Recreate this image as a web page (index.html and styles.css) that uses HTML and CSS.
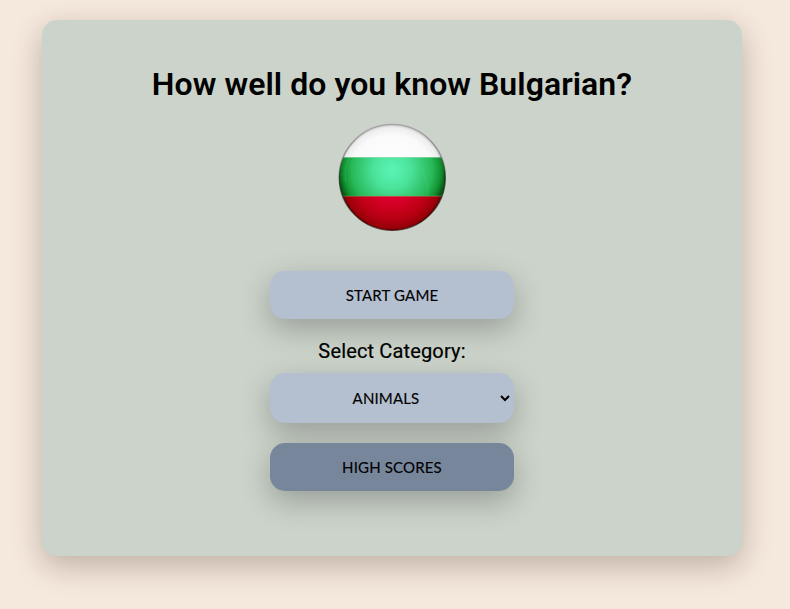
FILE: index.html
```html
<!DOCTYPE html>
<html lang="en">
<head>
<meta charset="utf-8">
<title>How well do you know Bulgarian?</title>
<link rel="stylesheet" href="styles.css">
</head>
<body>
<main class="card">
  <h1 class="title">How well do you know Bulgarian?</h1>
  <svg class="flag" viewBox="0 0 110 110" aria-hidden="true">
    <defs>
      <clipPath id="disc"><circle cx="55.3" cy="54.4" r="53"/></clipPath>
      <radialGradient id="white" gradientUnits="userSpaceOnUse" cx="55" cy="55" r="54">
        <stop offset="0" stop-color="#fff"/><stop offset=".8" stop-color="#fafafa"/><stop offset=".94" stop-color="#ededed"/><stop offset="1" stop-color="#bbb"/>
      </radialGradient>
      <radialGradient id="green" gradientUnits="userSpaceOnUse" cx="55" cy="47" r="54">
        <stop offset="0" stop-color="#5cf5b8"/><stop offset=".35" stop-color="#4be29a"/><stop offset=".75" stop-color="#28b858"/><stop offset=".9" stop-color="#129331"/><stop offset="1" stop-color="#075714"/>
      </radialGradient>
      <radialGradient id="red" gradientUnits="userSpaceOnUse" cx="55" cy="55" r="54">
        <stop offset="0" stop-color="#ed0035"/><stop offset=".4" stop-color="#dc002b"/><stop offset=".75" stop-color="#b90013"/><stop offset=".93" stop-color="#970008"/><stop offset="1" stop-color="#450000"/>
      </radialGradient>
      <linearGradient id="rim" x1="0" y1="0" x2="0" y2="1">
        <stop offset="0" stop-color="#888" stop-opacity=".6"/><stop offset=".3" stop-color="#666" stop-opacity=".6"/><stop offset=".5" stop-color="#031e06" stop-opacity=".6"/><stop offset="1" stop-color="#240000" stop-opacity=".6"/>
      </linearGradient>
    </defs>
    <g clip-path="url(#disc)">
      <path fill="url(#white)" d="M0 0h110v35H0z"/>
      <path fill="url(#green)" d="M0 34.4h110v39H0z"/>
      <path fill="url(#red)" d="M0 73.2h110V110H0z"/>
      <path d="M0 34.5h110" stroke="#168b43" stroke-opacity=".3" stroke-width=".7"/>
      <path d="M0 73h110" stroke="#77c95d" stroke-opacity=".4" stroke-width=".7"/>
      <path d="M12 34.4Q6 47 9 59M78 34.4Q91 51 91 73" fill="none" stroke="#57dc91" stroke-opacity=".18" stroke-width="1.2"/>
    </g>
    <circle cx="55.3" cy="54.4" r="53" fill="none" stroke="url(#rim)" stroke-width="1.4"/>
  </svg>
  <button class="control start" type="button">START GAME</button>
  <label class="label" for="category">Select Category:</label>
  <select class="control select" id="category"><option>ANIMALS</option></select>
  <button class="control scores" type="button">HIGH SCORES</button>
</main>
</body>
</html>
```
FILE: styles.css
```css
* { box-sizing: border-box; }
body {
  margin: 0;
  padding: 20px 48px 0 42px;
  min-height: 609px;
  background: #f5e8dc;
  color: #000;
  font-family: Roboto, sans-serif;
}
.card {
  display: flex;
  flex-direction: column;
  align-items: center;
  width: 700px;
  height: 536px;
  padding-top: 45px;
  border-radius: 15px;
  background: #cbd3ca;
  box-shadow: 0 10px 30px rgba(40, 15, 15, .26);
}
.title {
  margin: 0;
  font-size: 32px;
  line-height: 38px;
  font-weight: 600;
  letter-spacing: .06px;
  white-space: nowrap;
}
.flag {
  display: block;
  width: 110px;
  height: 110px;
  margin-top: 20px;
}
.control {
  display: block;
  width: 244px;
  height: 48px;
  padding: 0 0 1px;
  border: 0;
  border-radius: 15px;
  background: #b4c0d0;
  color: #000;
  font: 400 15px Lato, sans-serif;
  letter-spacing: .16px;
  -webkit-text-stroke: .15px #000;
  text-align: center;
  box-shadow: 0 10px 30px rgba(0, 0, 0, .25);
}
.start { margin-top: 38px; }
.label {
  margin-top: 20px;
  font-size: 20px;
  line-height: 24px;
  font-weight: 400;
  letter-spacing: .15px;
  -webkit-text-stroke: .2px #000;
}
.select { height: 50px; margin-top: 10px; border: 1px solid transparent; background-clip: border-box; }
.scores { margin-top: 20px; background: #78869c; }
```
